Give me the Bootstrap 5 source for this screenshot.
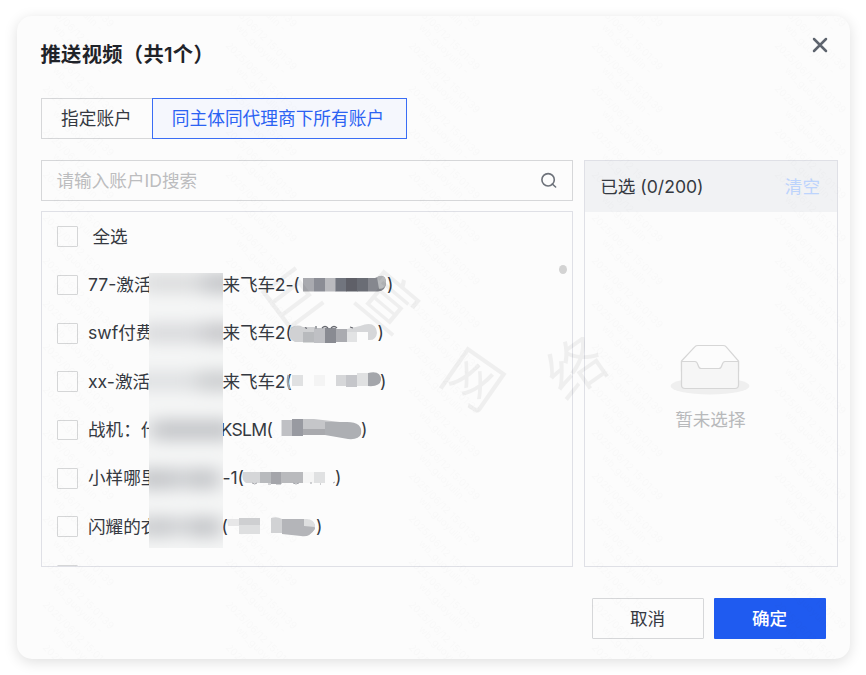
<!DOCTYPE html>
<html lang="zh-CN">
<head>
<meta charset="utf-8">
<meta name="viewport" content="width=device-width, initial-scale=1">
<title>推送视频</title>
<link href="https://cdn.jsdelivr.net/npm/bootstrap@5.3.0/dist/css/bootstrap.min.css" rel="stylesheet">
<style>
body{font-family:Inter,"Noto Sans CJK SC",sans-serif;font-size:17.6px;line-height:26px;color:#353941;background:#fff;height:675px;padding:16px 0 0 17px}
.dialog-box{width:833px;height:643px;background:#fcfcfc;border-radius:15px;box-shadow:0 3px 14px rgba(0,0,0,.13);padding:24px 12px 20px 24px}
.dialog-title{font-size:20.3px;font-weight:600;line-height:30px;letter-spacing:.3px;color:#1f2329;margin:0 0 0 -.5px}
.dialog-head{height:58px}
.close-x{background:none;border:0;padding:0;margin:-4px 9px 0 0;line-height:0}
.tab-group{height:41px;margin-bottom:20px}
.tab-btn{border:1px solid #d6d7d9;border-radius:0;height:41px;font-size:17.7px;line-height:26px;color:#353941;padding:6px 19px}
.tab-first{width:110.5px;padding-right:0;text-align:left;border-right:0}
.tab-on{width:255px;border:1.5px solid #3a6df5;background:#f5f7fd;color:#2b62f3;padding:6px 2px 6px 0}
.panes{gap:10.5px;padding-top:1px}
.pane-left{width:532.5px}
.pane-right{width:254.5px;height:407px;border:1px solid #dfe0e6}
.search-box{height:41px;border:1px solid #d6d7d9;padding:0 15px 0 14.500px;color:#bcbdbf;margin-bottom:10px}
.pick-list{height:356px;border:1px solid #dfe0e6;overflow:hidden;padding:.5px 0 0 15px}
.pick-row{height:48.35px;white-space:pre}
.pick-box{width:20.5px;height:20.5px;border:1.3px solid #d5d6d7;border-radius:1px;flex:none}
.name-start{width:61.5px;margin-left:10.5px;flex:none}
.name-end{margin-left:73px;flex:none;letter-spacing:-.15px}
.pick-row:nth-child(2) .name-end{width:164.5px}
.pick-row:nth-child(3) .name-end{width:155px}
.pick-row:nth-child(4) .name-end{width:157.5px}
.pick-row:nth-child(5) .name-end{width:138.5px;text-indent:-2px;letter-spacing:-.7px}
.pick-row:nth-child(6) .name-end{width:112.5px}
.pick-row:nth-child(7) .name-end{width:93.5px;text-indent:-1px}
.pick-all{margin-left:15px}
.picked-head{height:51px;background:#f1f2f4;padding:1px 17px 0 15.5px}
.clear-link{color:#bdd4fd;text-decoration:none}
.empty-box{padding:130px 1px 0 0;color:#b8b9bb}
.empty-label{margin-top:9px}
.foot-bar{gap:10px;padding:31px 12.5px 0 0}
.foot-btn{width:112px;height:41px;border-radius:1px;font-size:17.6px;line-height:26px;padding:6px}
.foot-cancel{border:1.3px solid #d6d7d9;color:#353941}
.foot-ok{background:#1f5bf0;color:#fff;border:0;font-weight:500}
.mask-layer{left:0;top:0;pointer-events:none}
</style>
<script src="https://cdn.jsdelivr.net/npm/bootstrap@5.3.0/dist/js/bootstrap.bundle.min.js"></script>
</head>
<body>
<main class="dialog-box">
  <header class="dialog-head d-flex justify-content-between align-items-start">
    <h1 class="dialog-title">推送视频（共1个）</h1>
    <button class="close-x" aria-label="关闭"><svg width="18" height="18" viewBox="0 0 18 18"><path d="M3 3l12 12M15 3L3 15" stroke="#5e646e" stroke-width="2.5" stroke-linecap="round"/></svg></button>
  </header>
  <div class="tab-group d-flex">
    <button class="btn tab-btn tab-first">指定账户</button>
    <button class="btn tab-btn tab-on">同主体同代理商下所有账户</button>
  </div>
  <div class="panes d-flex">
    <section class="pane-left">
      <div class="search-box d-flex justify-content-between align-items-center"><span>请输入账户ID搜索</span>
        <svg width="17" height="17" viewBox="0 0 17 17" fill="none" stroke="#6d727a" stroke-width="1.6"><circle cx="8.1" cy="7.8" r="6.2"/><path d="M12.300 12l3.300 3" stroke-linecap="round"/></svg></div>
      <div class="pick-list">
        <div class="pick-row d-flex align-items-center"><i class="pick-box"></i><span class="pick-all">全选</span></div>
        <div class="pick-row d-flex align-items-center"><i class="pick-box"></i><span class="name-start">77-激活</span><span class="name-end">来飞车2-(</span><span>)</span></div>
        <div class="pick-row d-flex align-items-center"><i class="pick-box"></i><span class="name-start">swf付费</span><span class="name-end">来飞车2(</span><span>)</span></div>
        <div class="pick-row d-flex align-items-center"><i class="pick-box"></i><span class="name-start">xx-激活</span><span class="name-end">来飞车2(</span><span>)</span></div>
        <div class="pick-row d-flex align-items-center"><i class="pick-box"></i><span class="name-start">战机：什</span><span class="name-end">KSLM(</span><span>)</span></div>
        <div class="pick-row d-flex align-items-center"><i class="pick-box"></i><span class="name-start">小样哪里</span><span class="name-end">-1(</span><span>)</span></div>
        <div class="pick-row d-flex align-items-center"><i class="pick-box"></i><span class="name-start">闪耀的衣</span><span class="name-end">(</span><span>)</span></div>
        <div class="pick-row d-flex align-items-center"><i class="pick-box"></i></div>
      </div>
    </section>
    <section class="pane-right">
      <div class="picked-head d-flex justify-content-between align-items-center"><span>已选 (0/200)</span><a class="clear-link" href="#">清空</a></div>
      <div class="empty-box d-flex flex-column align-items-center">
        <svg width="80" height="56" viewBox="0 0 80 56"><ellipse cx="40" cy="44" rx="39.5" ry="8.5" fill="#efefef"/><g stroke="#d6d6d6" stroke-width="1.2" transform="translate(0 -1)"><path d="M11.5 20L25 5.7Q26 4.5 28 4.500H53Q55 4.500 56 5.700L68.500 20V30H11.500Z" fill="#fcfcfc"/><path d="M11.500 20.500H25C29 20.500 27 27.500 31 27.500H49C53 27.500 51 20.500 55 20.500H68.500V44Q68.500 47.500 65 47.500H15Q11.500 47.500 11.500 44Z" fill="#f6f6f6"/></g></svg>
        <span class="empty-label">暂未选择</span>
      </div>
    </section>
  </div>
  <footer class="foot-bar d-flex justify-content-end">
    <button class="btn foot-btn foot-cancel">取消</button>
    <button class="btn foot-btn foot-ok">确定</button>
  </footer>
</main>

<!-- Privacy masks, scroll thumb and watermarks lie over the dialog -->
<svg class="mask-layer position-absolute" width="866" height="675" viewBox="0 0 866 675" aria-hidden="true">
  <defs>
    <filter id="soft" x="-50%" y="-100%" width="200%" height="300%"><feGaussianBlur stdDeviation="10 8"/></filter>
    <filter id="edge"><feGaussianBlur stdDeviation=".35"/></filter>
    <clipPath id="strip"><rect x="149" y="273" width="74" height="275"/></clipPath>
    <clipPath id="panel"><rect x="17" y="16" width="833" height="643" rx="15"/></clipPath>
    <pattern id="stamp" width="183" height="43" patternUnits="userSpaceOnUse">
      <g font-family="Inter,sans-serif" font-size="10" fill="#000">
        <text transform="translate(42 -40) rotate(45)">2025/06/12 15:01:39</text>
        <text transform="translate(42 3) rotate(45)">2025/06/12 15:01:39</text>
        <text transform="translate(52 -58) rotate(45)">wb_guoyulin -</text>
        <text transform="translate(52 -15) rotate(45)">wb_guoyulin -</text>
        <text transform="translate(52 28) rotate(45)">wb_guoyulin -</text>
      </g>
    </pattern>
  </defs>
  <rect x="17" y="16" width="833" height="643" fill="url(#stamp)" opacity=".016" clip-path="url(#panel)"/>
  <g clip-path="url(#strip)"><rect x="149" y="273" width="74" height="275" fill="#f5f6f6"/>
    <g filter="url(#soft)" fill="#c6c8cb">
      <rect x="140" y="273" width="95" height="20" opacity=".55"/><rect x="203" y="272" width="45" height="22"/>
      <rect x="140" y="323" width="95" height="20" opacity=".6"/><rect x="203" y="322" width="45" height="22" opacity=".9"/>
      <rect x="130" y="371" width="110" height="20" opacity=".45"/><rect x="198" y="370" width="45" height="22" opacity=".7"/>
      <rect x="150" y="419" width="85" height="22"/>
      <rect x="135" y="468" width="44" height="22"/><rect x="186" y="468" width="34" height="22"/><rect x="150" y="469" width="65" height="18" opacity=".5"/>
      <rect x="135" y="516" width="40" height="22" opacity=".8"/><rect x="188" y="516" width="34" height="22"/><rect x="150" y="517" width="65" height="18" opacity=".6"/>
    </g>
  </g>
  <g filter="url(#edge)">
    <rect x="303" y="278" width="11" height="13.500" fill="#a9aaaf"/><rect x="314" y="278" width="11" height="13.500" fill="#8b8d95"/><rect x="325" y="278" width="11" height="13.500" fill="#b9babe"/><rect x="335.500" y="278" width="11" height="13.500" fill="#71747e"/><rect x="346" y="278" width="11.500" height="13.500" fill="#5e6068"/><rect x="357" y="278" width="11" height="13.500" fill="#6a6d74"/><path d="M368 278H375Q385 273 386 282Q386 291 378 291.500H368Z" fill="#85878e"/><path d="M377 277Q386 273 386 282Q386 289 379 289Z" fill="#b8babd"/>
    <path d="M291 327.500Q297 324 303 327H315V342H295Q288 339 289 333Z" fill="#d0d1d3"/><path d="M303 332H325V342.500H303Z" fill="#b8babd"/><path d="M314 328H325V343H314Z" fill="#bfc0c4"/><path d="M325 328H336V343H325Z" fill="#898b92"/><path d="M336 329H347V342H336Z" fill="#aaabb0"/><path d="M347 332H357V342H347Z" fill="#e2e3e4"/><path d="M347 329L360 326Q376 320 377 333Q376 341 368 340V332H347Z" fill="#d6d7d9"/>
    <path d="M305 327.500l2 1M316 326v2.500M322 328q3-3 6 0M331 328q3-3 6 0M350 327l3 1" stroke="#676a71" stroke-width="1.200" fill="none"/>
    <path d="M288.500 375Q286.500 382 289.500 389" stroke="#a2a4a9" stroke-width="2" fill="none"/><rect x="292" y="375" width="11" height="11" fill="#e0e1e2"/><rect x="314" y="375" width="11" height="11" fill="#f4f4f4"/><rect x="336" y="375" width="11" height="11" fill="#d6d7d9"/><rect x="346" y="375" width="11" height="12" fill="#c5c6ca"/><rect x="357" y="373" width="11" height="13" fill="#e0e1e2"/><path d="M368 373Q381 370 381 380Q380 387 368 386Z" fill="#a4a6ab"/>
    <path d="M281.500 420H292V436H281.500Z" fill="#bfc0c4"/><path d="M292 419H303V436H292Z" fill="#989aa1"/><path d="M303 419H314L340 422V430H303Z" fill="#c5c6c9"/><path d="M303 429H325V435H303Z" fill="#a9aaae"/><path d="M325 422L347 422Q363 422 361 434Q359 440 348 439L325 435Z" fill="#adafb3"/>
    <path d="M243 472H260V483H246Q241 480 243 472Z" fill="#d5d6d8"/><rect x="260" y="472" width="11" height="11" fill="#b8babd"/><rect x="271" y="472" width="10.500" height="12" fill="#a4a5aa"/><rect x="281" y="472" width="22" height="11" fill="#b9babd"/><rect x="303" y="472" width="11" height="11" fill="#f5f5f5"/><rect x="314" y="472" width="11" height="11" fill="#e0e1e2"/><path d="M252 483q3 2 5 0M268 484h3M276 484h5M293 483q3 2 6 0M310 483h2M320 484h1M333 483l2-1" stroke="#a4a6ab" fill="none"/>
    <path d="M227 519H239V526H228Z" fill="#e7e7e8"/><rect x="239" y="518" width="21" height="7" fill="#cecfd1"/><rect x="239" y="525" width="21" height="9" fill="#dedfe0"/><path d="M271 518Q277 516 282 519V533H271Z" fill="#d1d2d4"/><path d="M282 519H305Q316 521 315 529Q309 538 301 536L282 534Z" fill="#b4b5b9"/><path d="M304 519Q315 518 315 527L304 526Z" fill="#dedfe0"/>
  </g>
  <ellipse cx="563" cy="269.500" rx="4" ry="4.500" fill="#d3d3d3"/>
  <g font-family="'Noto Sans CJK SC',sans-serif" font-size="58" fill="#000" fill-opacity=".05" text-anchor="middle">
    <text transform="translate(291 300) rotate(-37)" y="21">巨</text>
    <text transform="translate(388 302) rotate(40)" y="21">宣</text>
    <text transform="translate(473 380) rotate(35)" y="21">网</text>
    <text transform="translate(576 368) rotate(-35)" y="21">络</text>
  </g>
</svg>
</body>
</html>
